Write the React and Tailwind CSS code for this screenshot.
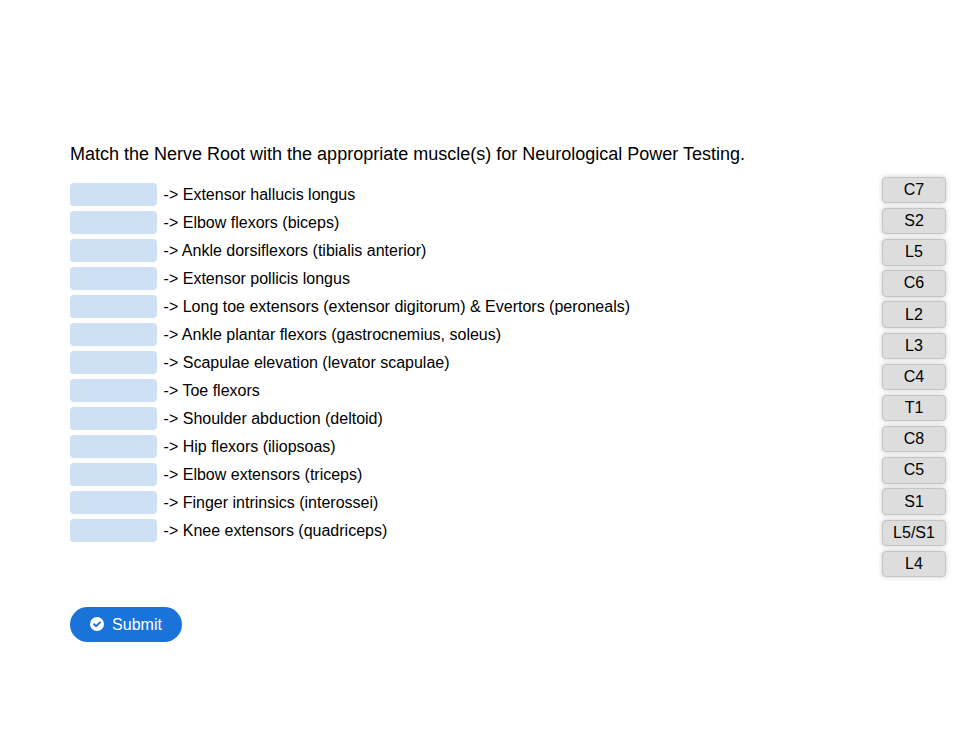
const muscles = [
  'Extensor hallucis longus',
  'Elbow flexors (biceps)',
  'Ankle dorsiflexors (tibialis anterior)',
  'Extensor pollicis longus',
  'Long toe extensors (extensor digitorum) & Evertors (peroneals)',
  'Ankle plantar flexors (gastrocnemius, soleus)',
  'Scapulae elevation (levator scapulae)',
  'Toe flexors',
  'Shoulder abduction (deltoid)',
  'Hip flexors (iliopsoas)',
  'Elbow extensors (triceps)',
  'Finger intrinsics (interossei)',
  'Knee extensors (quadriceps)',
];

const roots = ['C7', 'S2', 'L5', 'C6', 'L2', 'L3', 'C4', 'T1', 'C8', 'C5', 'S1', 'L5/S1', 'L4'];

export default function App() {
  return (
    <main className="h-[748px] w-full overflow-hidden bg-white pt-[142px] pr-[30px] pl-[70px] font-['Liberation_Sans',Arial,sans-serif] text-base text-black">
      <h1 className="h-[34.8px] text-[18px] leading-6">
        Match the Nerve Root with the appropriate muscle(s) for Neurological Power Testing.
      </h1>
      <div className="flex h-[430.3px] items-start justify-between">
        <ul className="pt-[4.3px]">
          {muscles.map((m) => (
            <li key={m} className="flex h-7 items-center whitespace-nowrap">
              <span className="mr-[6.6px] mb-px h-[23px] w-[87px] rounded-[4px] bg-[#cee0f4]" />
              <span>{'-> ' + m}</span>
            </li>
          ))}
        </ul>
        <div className="flex w-16 flex-col gap-[4.77px]">
          {roots.map((r) => (
            <div
              key={r}
              className="flex h-[26.4px] items-center justify-center rounded-[4px] border border-[#c4c4c4] bg-[#dddddd] leading-6 shadow-[0_0_5px_rgba(0,0,0,0.2)]"
            >
              {r}
            </div>
          ))}
        </div>
      </div>
      <button className="flex h-[35px] w-28 items-center justify-center gap-2 rounded-full bg-[#1a73d9] text-white">
        <svg viewBox="0 0 14 14" className="mb-px h-3.5 w-3.5" fill="none">
          <circle cx="7" cy="7" r="7" fill="currentColor" />
          <path d="M3.500 6.800L6.100 9.200L10.600 4.900" stroke="#1a73d9" strokeWidth="1.9" />
        </svg>
        Submit
      </button>
    </main>
  );
}
